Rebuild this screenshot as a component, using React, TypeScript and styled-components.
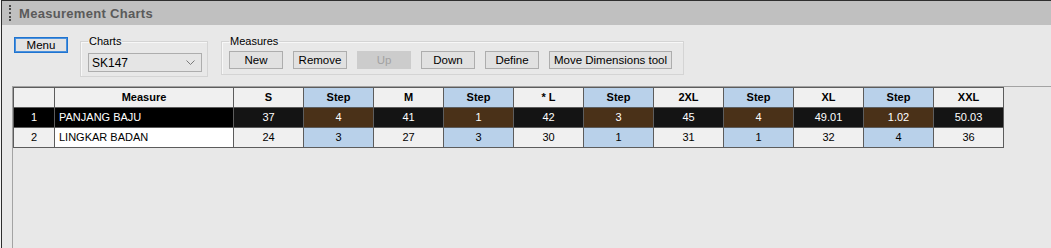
import { Fragment } from "react";
import styled, { createGlobalStyle } from "styled-components";

const GlobalStyle = createGlobalStyle`
  html, body {
    margin: 0;
    padding: 0;
    background: #f4f4f4;
  }
  body {
    font-family: "Liberation Sans", Arial, sans-serif;
    font-size: 11px;
    color: #000;
  }
`;

const Window = styled.div`
  width: 1050px;
  height: 247px;
  margin-left: 1px;
  border-top: 1px solid #2e2e2e;
  border-left: 1px solid #2e2e2e;
  display: flex;
  flex-direction: column;
  overflow: hidden;
`;

const TitleBar = styled.div`
  height: 24px;
  flex-shrink: 0;
  background: #c0c0c0;
  display: flex;
  align-items: center;
  padding-left: 7px;
`;

const Grip = styled.span`
  width: 0;
  height: 16px;
  border-left: 2px dotted #4a4a4a;
  margin-right: 8px;
`;

const Title = styled.span`
  font-weight: bold;
  font-size: 13px;
  letter-spacing: 0.3px;
  color: #5a5a5a;
`;

const Body = styled.div`
  flex: 1;
  background: #e8e8e8;
  display: flex;
  flex-direction: column;
`;

const Toolbar = styled.div`
  display: flex;
  align-items: flex-start;
  padding: 10px 0 0 12px;
  height: 51px;
  flex-shrink: 0;
`;

const MenuButton = styled.button`
  width: 54px;
  height: 16px;
  margin: 2px 12px 0 0;
  padding: 0;
  background: #e3e3e3;
  border: 1px solid #1f74d0;
  box-shadow: inset 0 0 0 1px #4a90dc;
  font: 11.5px "Liberation Sans", Arial, sans-serif;
  color: #000;
`;

const Group = styled.fieldset<{ $w: number; $gap?: number }>`
  width: ${(p) => p.$w}px;
  box-sizing: border-box;
  margin: 0 0 0 ${(p) => p.$gap ?? 0}px;
  padding: 0 5px 4px 7px;
  border: 1px solid #d4d4d4;
  box-shadow: inset 1px 1px 0 #f7f7f7;
`;

const Legend = styled.legend`
  padding: 0 1px;
  line-height: 13px;
  font-size: 11px;
  color: #000;
`;

const GroupRow = styled.div<{ $top: number }>`
  display: flex;
  gap: 10px;
  padding-top: ${(p) => p.$top}px;
  height: 19px;
  align-items: flex-start;
`;

const Combo = styled.div`
  width: 114px;
  height: 19px;
  box-sizing: border-box;
  background: #e5e5e5;
  border: 1px solid #adadad;
  display: flex;
  align-items: center;
  justify-content: space-between;
  padding: 0 6px 0 3px;
  font-size: 12px;
`;

const Button = styled.button<{ $w: number }>`
  width: ${(p) => p.$w}px;
  height: 18px;
  padding: 0;
  box-sizing: border-box;
  background: #e1e1e1;
  border: 1px solid #adadad;
  font: 11.5px "Liberation Sans", Arial, sans-serif;
  color: #000;

  &:disabled {
    background: #cccccc;
    border-color: #cccccc;
    color: #a2a2a2;
  }
`;

const GridPanel = styled.div`
  flex: 1;
  margin-left: 10px;
  border-top: 1px solid #a3a3a3;
  border-left: 1px solid #a3a3a3;
`;

const Grid = styled.div`
  display: inline-grid;
  grid-template-columns: 40px 178px repeat(11, 69px);
  grid-auto-rows: 19px;
  gap: 1px;
  background: #5c5c5c;
  border: 1px solid #5c5c5c;
  vertical-align: top;
`;

type CellKind = "fixed" | "stepHead" | "selHead" | "selName" | "selValue" | "selStep" | "name" | "value" | "step";

const cellColors: Record<CellKind, [string, string]> = {
  fixed: ["#f0f0f0", "#000"],
  stepHead: ["#b9d1ea", "#000"],
  selHead: ["#000000", "#fff"],
  selName: ["#000000", "#fff"],
  selValue: ["#141414", "#fff"],
  selStep: ["#4a3118", "#fff"],
  name: ["#ffffff", "#000"],
  value: ["#f0f0f0", "#000"],
  step: ["#b9d1ea", "#000"],
};

const Cell = styled.div<{ $kind: CellKind; $bold?: boolean; $left?: boolean }>`
  background: ${(p) => cellColors[p.$kind][0]};
  color: ${(p) => cellColors[p.$kind][1]};
  font-weight: ${(p) => (p.$bold ? "bold" : "normal")};
  text-align: ${(p) => (p.$left ? "left" : "center")};
  padding-left: ${(p) => (p.$left ? "4px" : "0")};
  line-height: 19px;
  font-size: 11px;
  white-space: nowrap;
  overflow: hidden;
`;

const sizes = ["S", "M", "* L", "2XL", "XL", "XXL"];

const rows = [
  { name: "PANJANG BAJU", values: ["37", "41", "42", "45", "49.01", "50.03"], steps: ["4", "1", "3", "4", "1.02"] },
  { name: "LINGKAR BADAN", values: ["24", "27", "30", "31", "32", "36"], steps: ["3", "3", "1", "1", "4"] },
];

const Chevron = () => (
  <svg width="9" height="6" viewBox="0 0 9 6">
    <polyline points="0.5,0.5 4.5,4.5 8.5,0.5" fill="none" stroke="#7a7a7a" strokeWidth="1" />
  </svg>
);

const App = () => {
  return (
    <>
      <GlobalStyle />
      <Window>
        <TitleBar>
          <Grip />
          <Title>Measurement Charts</Title>
        </TitleBar>
        <Body>
          <Toolbar>
            <MenuButton>Menu</MenuButton>
            <Group $w={128}>
              <Legend>Charts</Legend>
              <GroupRow $top={5}>
                <Combo>
                  <span>SK147</span>
                  <Chevron />
                </Combo>
              </GroupRow>
            </Group>
            <Group $w={463} $gap={13}>
              <Legend>Measures</Legend>
              <GroupRow $top={3}>
                <Button $w={54}>New</Button>
                <Button $w={54}>Remove</Button>
                <Button $w={54} disabled>
                  Up
                </Button>
                <Button $w={54}>Down</Button>
                <Button $w={54}>Define</Button>
                <Button $w={123}>Move Dimensions tool</Button>
              </GroupRow>
            </Group>
          </Toolbar>
          <GridPanel>
            <Grid>
              <Cell $kind="fixed" />
              <Cell $kind="fixed" $bold>
                Measure
              </Cell>
              {sizes.map((s, i) => (
                <Fragment key={s}>
                  <Cell $kind="fixed" $bold>
                    {s}
                  </Cell>
                  {i < sizes.length - 1 && (
                    <Cell $kind="stepHead" $bold>
                      Step
                    </Cell>
                  )}
                </Fragment>
              ))}
              {rows.map((row, r) => {
                const sel = r === 0;
                return (
                  <Fragment key={row.name}>
                    <Cell $kind={sel ? "selHead" : "fixed"}>{r + 1}</Cell>
                    <Cell $kind={sel ? "selName" : "name"} $left>
                      {row.name}
                    </Cell>
                    {row.values.map((v, i) => (
                      <Fragment key={i}>
                        <Cell $kind={sel ? "selValue" : "value"}>{v}</Cell>
                        {i < row.steps.length && <Cell $kind={sel ? "selStep" : "step"}>{row.steps[i]}</Cell>}
                      </Fragment>
                    ))}
                  </Fragment>
                );
              })}
            </Grid>
          </GridPanel>
        </Body>
      </Window>
    </>
  );
};

export default App;
